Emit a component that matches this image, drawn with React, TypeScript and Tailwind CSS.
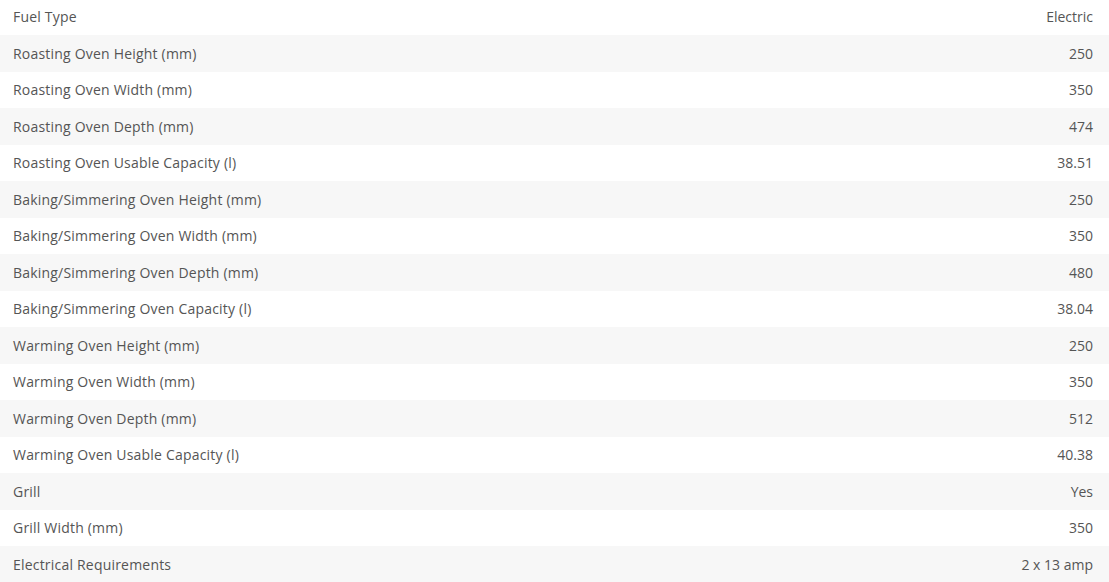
const specs: [string, string][] = [
  ['Fuel Type', 'Electric'],
  ['Roasting Oven Height (mm)', '250'],
  ['Roasting Oven Width (mm)', '350'],
  ['Roasting Oven Depth (mm)', '474'],
  ['Roasting Oven Usable Capacity (l)', '38.51'],
  ['Baking/Simmering Oven Height (mm)', '250'],
  ['Baking/Simmering Oven Width (mm)', '350'],
  ['Baking/Simmering Oven Depth (mm)', '480'],
  ['Baking/Simmering Oven Capacity (l)', '38.04'],
  ['Warming Oven Height (mm)', '250'],
  ['Warming Oven Width (mm)', '350'],
  ['Warming Oven Depth (mm)', '512'],
  ['Warming Oven Usable Capacity (l)', '40.38'],
  ['Grill', 'Yes'],
  ['Grill Width (mm)', '350'],
  ['Electrical Requirements', '2 x 13 amp'],
];

export default function App() {
  return (
    <div className="w-full -mt-[1.4px] bg-white font-['Open_Sans',sans-serif] text-[14px] text-[#555]">
      {specs.map(([label, value], i) => (
        <div
          key={label}
          className={`flex h-[36.5px] items-center justify-between pl-[13px] pr-[16px] ${
            i % 2 === 1 ? 'bg-[#f7f7f7]' : 'bg-white'
          }`}
        >
          <span className="tracking-[0.2px]">{label}</span>
          <span>{value}</span>
        </div>
      ))}
    </div>
  );
}
